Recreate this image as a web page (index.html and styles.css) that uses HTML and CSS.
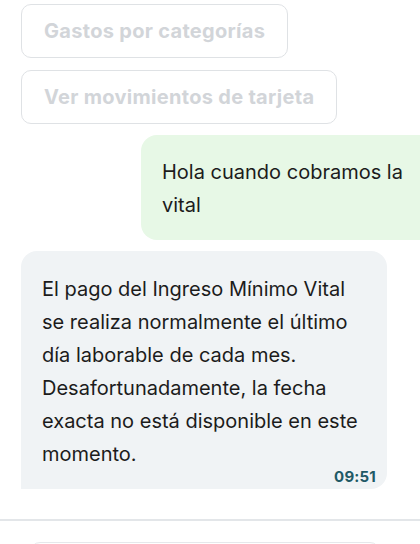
FILE: index.html
```html
<!DOCTYPE html>
<html lang="es">

<head>
	<meta charset="UTF-8">
	<meta name="viewport" content="width=device-width, initial-scale=1.0">
	<title>Chat</title>
	<link rel="stylesheet" href="styles.css">
</head>

<body>

	<div class="chat">
		<div class="suggestions">
			<button class="chip" disabled>Gastos por categorías</button>
			<button class="chip" disabled>Ver movimientos de tarjeta</button>
		</div>

		<div class="msg msg-out">
			<p>Hola cuando cobramos la vital</p>
		</div>

		<div class="msg msg-in">
			<p>El pago del Ingreso Mínimo Vital se realiza normalmente el último día laborable de cada mes. Desafortunadamente, la fecha exacta no está disponible en este momento.</p>
			<span class="time">09:51</span>
		</div>
	</div>

	<div class="composer">
		<div class="input"></div>
	</div>

</body>

</html>
```

FILE: styles.css
```css
body {
	margin: 0;
	font-family: Inter, 'Noto Sans', sans-serif;
	color: #1c1c1c;
	background-color: #fff;
	overflow: hidden;
}

.chat {
	display: flex;
	flex-direction: column;
	gap: 11px;
	padding: 4px 0 0 21px;
}

.suggestions {
	display: flex;
	flex-direction: column;
	align-items: flex-start;
	gap: 12px;
}

.chip {
	font-family: inherit;
	font-size: 20px;
	font-weight: 700;
	letter-spacing: 0.3px;
	color: #d2d5d9;
	background: #fff;
	border: 1px solid #dfe2e5;
	border-radius: 10px;
	height: 54px;
	padding: 0 22px;
}

.msg p {
	margin: 0;
	font-size: 20px;
	line-height: 33px;
}

.msg-out {
	align-self: flex-end;
	width: 258px;
	background-color: #e7f8e6;
	border-radius: 16px 0 0 16px;
	padding: 21px 0 18px 21px;
}

.msg-in {
	width: 324px;
	background-color: #f0f3f5;
	border-radius: 16px 16px 16px 0;
	padding: 22px 21px 4px 21px;
	display: flex;
	flex-direction: column;
}

.time {
	align-self: flex-end;
	margin-top: -2px;
	margin-right: -10px;
	font-size: 15px;
	font-weight: 700;
	line-height: 16px;
	color: #1f5a66;
	letter-spacing: 0.2px;
}

.composer {
	margin-top: 30px;
	border-top: 2px solid #e3e6e9;
	padding: 21px 40px 0 30px;
}

.input {
	height: 48px;
	border: 1px solid #e6e8eb;
	border-radius: 10px;
}
```
